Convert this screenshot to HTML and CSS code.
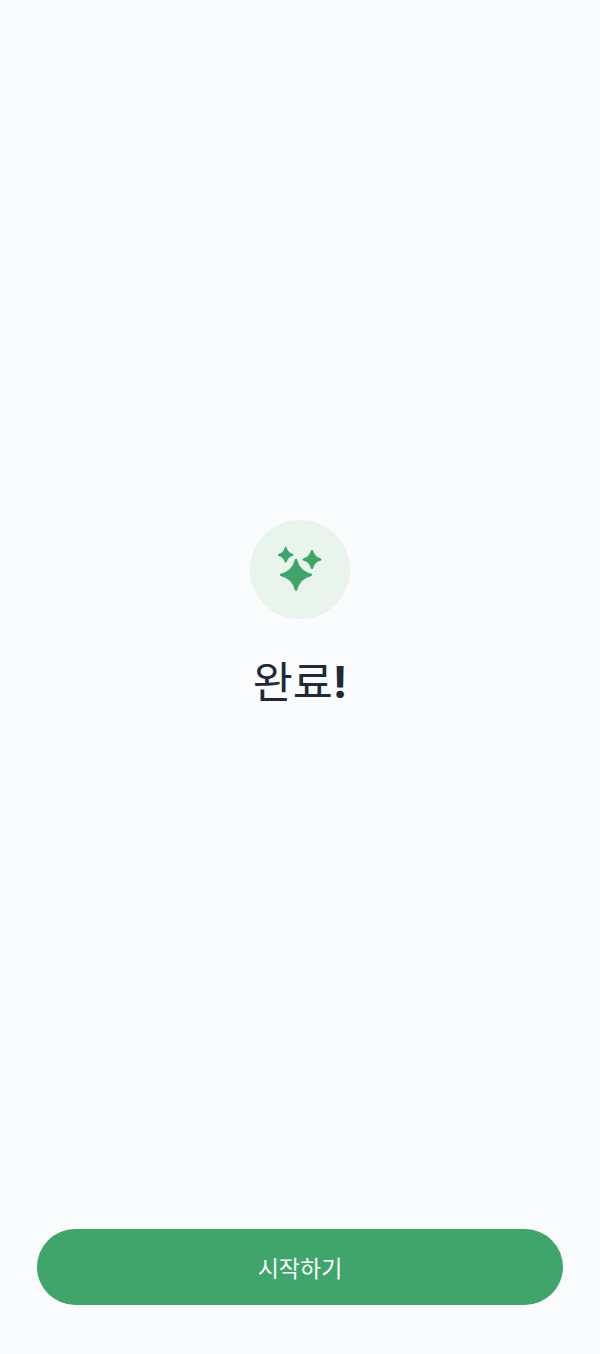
FILE: index.html
```html
<!DOCTYPE html>
<html lang="ko">
<head>
<meta charset="utf-8">
<title>완료</title>
<link rel="stylesheet" href="styles.css">
</head>
<body>
<div class="screen">
  <main class="content">
    <div class="badge">
      <svg class="sparkles" viewBox="0 0 48 48" width="48" height="48" aria-hidden="true">
        <path d="M20 13.800C22 22.050 26.750 26.800 35 28.800C26.750 30.800 22 35.550 20 43.800C18 35.550 13.250 30.800 5 28.800C13.250 26.800 18 22.050 20 13.800Z"/>
        <path d="M9.700 2.200C10.600 5.800 12.700 7.900 16.300 8.800C12.700 9.700 10.600 11.800 9.700 15.400C8.800 11.800 6.700 9.700 3.100 8.800C6.700 7.900 8.800 5.800 9.700 2.200Z"/>
        <path d="M36 5.100C37.200 9.700 39.800 12.300 44.400 13.500C39.800 14.700 37.200 17.300 36 21.900C34.800 17.300 32.200 14.700 27.600 13.500C32.200 12.300 34.800 9.700 36 5.100Z"/>
      </svg>
    </div>
    <h1 class="title">완료<span class="bang">!</span></h1>
  </main>
  <footer class="footer">
    <button class="primary" type="button">시작하기</button>
  </footer>
</div>
</body>
</html>
```

FILE: styles.css
```css
* { box-sizing: border-box; }
html, body { margin: 0; height: 100%; }
body {
  background: #f9fbfc;
  font-family: "Noto Sans CJK KR", Inter, "Noto Sans", sans-serif;
}
.screen {
  height: 1354px;
  display: flex;
  flex-direction: column;
}
.content {
  flex: 1;
  display: flex;
  flex-direction: column;
  align-items: center;
  padding-top: 520px;
}
.badge {
  width: 99.500px;
  height: 99px;
  border-radius: 50%;
  background: #e8f4ec;
  display: flex;
  align-items: center;
  justify-content: center;
}
.sparkles {
  fill: #40a56b;
  stroke: #40a56b;
  stroke-width: 2.300;
  stroke-linejoin: round;
}
.title {
  margin: 31px 0 0;
  font-size: 43.500px;
  line-height: 60px;
  font-weight: 400;
  color: #1f2937;
}
.bang {
  font-family: Inter, sans-serif;
  font-weight: 700;
}
.footer {
  padding: 0 37px 49px;
}
.primary {
  display: block;
  width: 100%;
  height: 76px;
  border: 0;
  border-radius: 38px;
  background: #40a56b;
  color: #fff;
  font: 400 23px/32px "Noto Sans CJK KR", sans-serif;
}
```
